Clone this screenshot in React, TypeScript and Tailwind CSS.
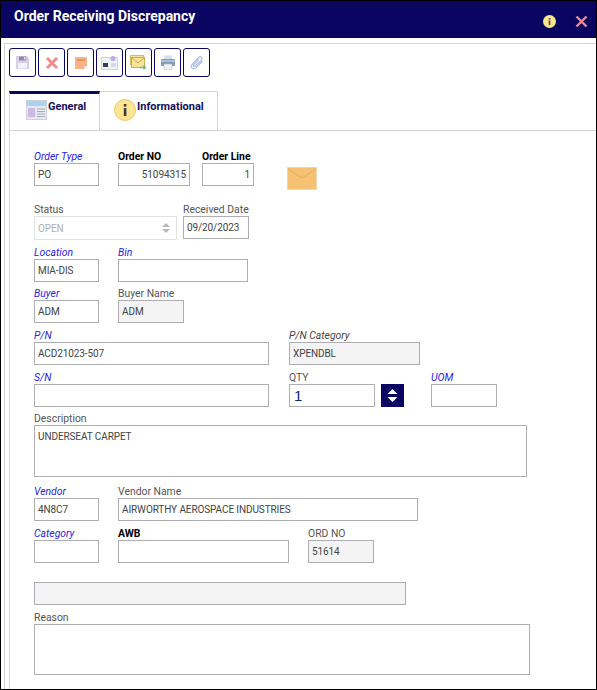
import React from "react";

function Field({ label, value, kind, w, h = "h-[23px]", box = "", right, className = "" }: { label?: string; value?: string; kind?: "link" | "bold" | "plain" | "italic"; w: string; h?: string; box?: string; right?: boolean; className?: string }) {
  const lab = kind === "link" ? "text-[#2a22e0] italic" : kind === "bold" ? "text-black font-bold" : kind === "italic" ? "text-[#444] italic" : "text-[#555]";
  return (
    <div className={`flex flex-col ${w} ${className}`}>
      <div className={`text-[10.4px] leading-[13px] h-[13px] whitespace-nowrap ${lab}`}>{label}</div>
      <div className={`${h} border border-[#adadb3] text-[10px] tracking-[-0.1px] text-[#444] pl-[3px] pr-[3px] pt-[4px] leading-[13px] ${right ? "text-right" : ""} ${box}`}>{value}</div>
    </div>
  );
}

const grey = "bg-[#f4f4f4]";

function ToolBtn({ children }: { children: React.ReactNode }) {
  return <div className="w-[27px] h-[29px] border border-[#0a0560] rounded-[3px] flex items-center justify-center bg-white">{children}</div>;
}

export default function App() {
  return (
    <div className="font-['Roboto','Noto_Sans',sans-serif] w-[597px] h-[690px] bg-white overflow-hidden border-t border-black flex flex-col relative">
      <div className="h-[37px] bg-[#0a0560] flex items-center justify-between pl-[14px] pr-[8px] shrink-0">
        <span className="text-white font-bold text-[14px] -mt-[6px]">Order Receiving Discrepancy</span>
        <div className="flex items-center gap-[19px] mt-[3px] mr-[1px]">
          <svg width="13" height="13" viewBox="0 0 13 13"><circle cx="6.5" cy="6.5" r="6.5" fill="#fde58f" /><rect x="5.6" y="5.4" width="1.8" height="4.6" fill="#555" /><rect x="5.6" y="3" width="1.8" height="1.6" fill="#555" /></svg>
          <svg width="13" height="13" viewBox="0 0 13 13"><path d="M1.5 1.5 11.5 11.5M11.5 1.5 1.5 11.5" stroke="#f58a8a" strokeWidth="2.4" /></svg>
        </div>
      </div>
      <div className="flex-1 mt-[5px] ml-[4px] border-l border-t border-[#d4d4d4] flex flex-col">
        <div className="flex gap-[2px] pl-[4px] pt-[4px]">
          <ToolBtn>
            <svg width="15" height="15" viewBox="0 0 15 15"><path d="M1 1h11l2 2v11H1z" fill="#d6cfe6" /><rect x="4" y="1.5" width="7" height="4" fill="#8f8aa8" /><rect x="9" y="2" width="1.4" height="2.6" fill="#e5e2ee" /><rect x="3" y="8" width="9" height="5.5" fill="#f2f2fa" /></svg>
          </ToolBtn>
          <ToolBtn>
            <svg width="14" height="14" viewBox="0 0 14 14"><path d="M2 2 12 12M12 2 2 12" stroke="#f08c8c" strokeWidth="3" /></svg>
          </ToolBtn>
          <ToolBtn>
            <svg width="14" height="14" viewBox="0 0 14 14"><path d="M1 1h12v9l-3 3H1z" fill="#f8b488" /><path d="M3 4h8" stroke="#d8783c" strokeWidth="1" /><path d="M10 13v-3h3z" fill="#e5e5e5" /></svg>
          </ToolBtn>
          <ToolBtn>
            <svg width="17" height="15" viewBox="0 0 17 15"><rect x=".5" y="2.5" width="16" height="12" fill="#eef3f8" stroke="#c8d4e4" /><rect x="2" y="8" width="5" height="4" fill="#3c3f48" /><circle cx="12" cy="3.5" r="2.5" fill="#bda8e0" /><path d="M10 9h5M10 11h5" stroke="#b4c4d8" /></svg>
          </ToolBtn>
          <ToolBtn>
            <svg width="17" height="15" viewBox="0 0 17 15"><rect x=".5" y=".5" width="13" height="9" fill="#f5e2a0" stroke="#d8b860" /><rect x="1.5" y="2.5" width="13" height="10" fill="#f9e59a" stroke="#d0a94e" /><path d="M1.5 2.5 8 8l6.5-5.5" fill="none" stroke="#d0a94e" /><path d="M10 12.5h5M13.5 10.5l2 2-2 2" stroke="#6cbf7c" strokeWidth="1.4" fill="none" /></svg>
          </ToolBtn>
          <ToolBtn>
            <svg width="16" height="15" viewBox="0 0 16 15"><rect x="4" y="0.5" width="8" height="4" fill="#d8dde8" /><rect x="1" y="4" width="14" height="7" rx="1" fill="#8a97b0" /><rect x="1" y="5" width="14" height="2" fill="#a3c3e0" /><rect x="4" y="9" width="8" height="5.5" fill="#eef0f4" stroke="#b7bdc9" strokeWidth=".5" /></svg>
          </ToolBtn>
          <ToolBtn>
            <svg width="16" height="16" viewBox="0 0 16 16" fill="none" stroke="#a7bce3" strokeWidth="1.2"><path d="M13.5 6 7 12.7c-1.3 1.3-3.1 1.2-4 .3s-1-2.6.3-3.9l6.4-6.6c1-1 2.1-.9 2.8-.2s.8 1.8-.2 2.8L6.2 11c-.5.5-1.1.5-1.5.1s-.4-1 .1-1.5L10 4.3" /></svg>
          </ToolBtn>
        </div>
        <div className="flex mt-[14px] pl-[4px] h-[39px] text-[11px] font-bold text-[#14105a]">
          <div className="w-[91px] h-[39px] border-t-[3px] border-t-[#0a0560] border-r border-r-[#d4d4d4] border-l border-l-[#d4d4d4] flex pl-[16px] pt-[6px] gap-[1px]">
            <svg width="21" height="20" viewBox="0 0 21 20" className="shrink-0"><rect width="21" height="20" fill="#e6e8ef" stroke="#b5bcc9" /><rect x="1" y="1" width="19" height="5" fill="#a9d4f0" /><rect x="2" y="8" width="7" height="9" fill="#cdb9e3" /><path d="M11 9h8M11 11.5h8M11 14h8M11 16.5h8" stroke="#a5adba" /></svg>
            <span className="-mt-[1px]">General</span>
          </div>
          <div className="w-[118px] h-[39px] border-t border-t-[#d4d4d4] border-r border-r-[#d4d4d4] flex pl-[14px] pt-[8px] gap-[1px]">
            <svg width="22" height="22" viewBox="0 0 22 22" className="-mt-[1px] shrink-0"><circle cx="11" cy="11" r="10.5" fill="#fde592" stroke="#e8c876" /><rect x="9.8" y="9" width="2.6" height="8" fill="#3c3c3c" /><rect x="9.8" y="5" width="2.6" height="2.6" fill="#3c3c3c" /></svg>
            <span className="-mt-[1px]">Informational</span>
          </div>
        </div>
        <div className="flex-1 ml-[4px] border-l border-t border-[#d4d4d4] pl-[24px] pt-[19px]">
          <div className="flex">
            <Field label="Order Type" value="PO" kind="link" w="w-[65px]" />
            <Field label="Order NO" value="51094315" kind="bold" w="w-[72px]" right className="ml-[19px]" />
            <Field label="Order Line" value="1" kind="bold" w="w-[52px]" right className="ml-[12px]" />
            <svg width="30" height="23" viewBox="0 0 30 23" className="ml-[33px] mt-[17px]"><rect x=".5" y=".5" width="29" height="22" fill="#f5c273" stroke="#efd7ab" /><path d="M1 2 15 11 29 2" fill="none" stroke="#e3ac5e" /></svg>
          </div>
          <div className="flex mt-[13px]">
            <div className="flex flex-col w-[143px]">
              <div className="text-[10.4px] leading-[13px] h-[13px] text-[#555]">Status</div>
              <div className="h-[24px] border border-[#e2e2e2] text-[10px] tracking-[-0.1px] text-[#b0b0b0] pl-[3px] pr-[2px] flex items-center justify-between">
                <span>OPEN</span>
                <svg width="10" height="14" viewBox="0 0 10 14" className="mr-[3px]"><path d="M5 2 9 6H1zM5 12 1 8h8z" fill="#b8b8b8" /></svg>
              </div>
            </div>
            <Field label="Received Date" value="09/20/2023" kind="plain" w="w-[66px]" className="ml-[6px]" />
          </div>
          <div className="flex mt-[6px]">
            <Field label="Location" value="MIA-DIS" kind="link" w="w-[65px]" />
            <Field label="Bin" kind="link" w="w-[130px]" className="ml-[19px]" />
          </div>
          <div className="flex mt-[5px]">
            <Field label="Buyer" value="ADM" kind="link" w="w-[65px]" />
            <Field label="Buyer Name" value="ADM" w="w-[66px]" className="ml-[19px]" box={grey} />
          </div>
          <div className="flex mt-[6px]">
            <Field label="P/N" value="ACD21023-507" kind="link" w="w-[235px]" />
            <Field label="P/N Category" value="XPENDBL" kind="italic" w="w-[131px]" className="ml-[20px]" box={grey} />
          </div>
          <div className="flex mt-[6px]">
            <Field label="S/N" kind="link" w="w-[235px]" />
            <div className="flex flex-col w-[86px] ml-[20px]">
              <div className="text-[10.4px] leading-[13px] h-[13px] text-[#555]">QTY</div>
              <div className="h-[23px] border border-[#adadb3] text-[15px] text-[#0a2a70] pl-1 leading-[21px] font-['Liberation_Sans',sans-serif]">1</div>
            </div>
            <div className="w-[23px] h-[23px] mt-[13px] ml-[6px] bg-[#0a0560] flex items-center justify-center">
              <svg width="13" height="15" viewBox="0 0 13 15"><path d="M6.5 1 11.5 6h-10zM6.5 14 1.5 9h10z" fill="#fff" /></svg>
            </div>
            <Field label="UOM" kind="link" w="w-[66px]" className="ml-[27px]" />
          </div>
          <Field label="Description" value="UNDERSEAT CARPET" w="w-[493px]" h="h-[52px]" className="mt-[5px]" />
          <div className="flex mt-[8px]">
            <Field label="Vendor" value="4N8C7" kind="link" w="w-[65px]" />
            <Field label="Vendor Name" value="AIRWORTHY AEROSPACE INDUSTRIES" w="w-[300px]" className="ml-[19px]" />
          </div>
          <div className="flex mt-[6px]">
            <Field label="Category" kind="link" w="w-[65px]" />
            <Field label="AWB" kind="bold" w="w-[171px]" className="ml-[19px]" />
            <Field label="ORD NO" value="51614" w="w-[66px]" className="ml-[19px]" box={grey} />
          </div>
          <div className={`w-[372px] h-[23px] border border-[#adadb3] mt-[19px] ${grey}`} />
          <Field label="Reason" w="w-[496px]" h="h-[51px]" className="mt-[6px]" />
        </div>
      </div>
      <div className="absolute left-0 top-0 bottom-0 w-[1px] bg-black" />
      <div className="absolute right-0 top-0 bottom-0 w-[1px] bg-black" />
      <div className="absolute left-0 right-0 bottom-0 h-[1px] bg-black" />
    </div>
  );
}
